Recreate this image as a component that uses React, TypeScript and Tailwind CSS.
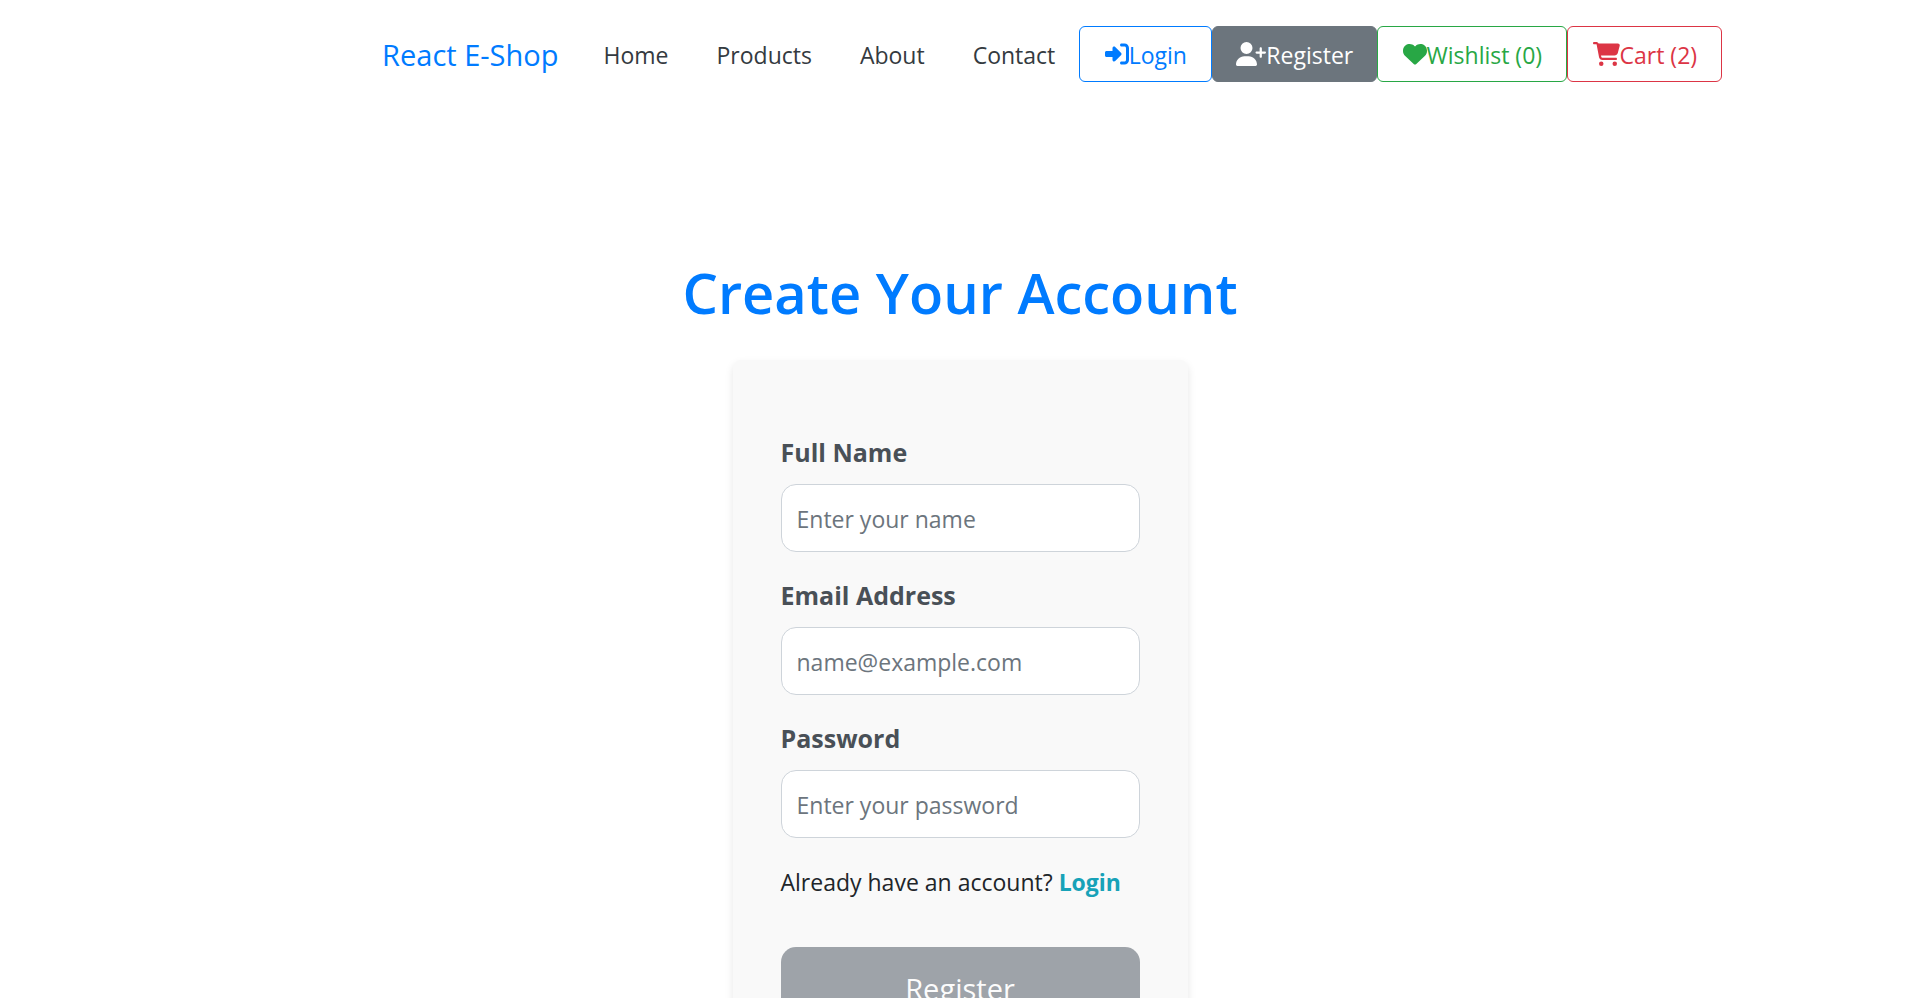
import React from "react";
import { FaCartShopping, FaHeart, FaRightToBracket, FaUserPlus } from "react-icons/fa6";

const links = ["Home", "Products", "About", "Contact"];

const actions = [
  { label: "Login", Icon: FaRightToBracket, size: "w-6", style: "min-w-[133px] border-[#007bff] text-[#007bff]" },
  { label: "Register", Icon: FaUserPlus, size: "w-[30px]", style: "min-w-[165px] border-[#6c757d] bg-[#6c757d] text-white" },
  { label: "Wishlist (0)", Icon: FaHeart, size: "w-6", style: "min-w-[190px] border-[#28a745] text-[#28a745]" },
  { label: "Cart (2)", Icon: FaCartShopping, size: "w-[27px]", style: "min-w-[155px] border-[#dc3545] text-[#dc3545]" },
];

const fields = [
  { id: "name", label: "Full Name", type: "text", placeholder: "Enter your name" },
  { id: "email", label: "Email Address", type: "email", placeholder: "name@example.com" },
  { id: "password", label: "Password", type: "password", placeholder: "Enter your password" },
];

function Navbar() {
  return (
    <nav className="flex h-[108px] items-center pl-[19.9%]">
      <a href="#" className="mr-[21px] pt-0.5 text-[29px] leading-9 whitespace-nowrap text-[#007bff]">
        React E-Shop
      </a>
      <ul className="flex pt-0.5">
        {links.map((link) => (
          <li key={link}>
            <a href="#" className="px-6 text-[#343a40]">
              {link}
            </a>
          </li>
        ))}
      </ul>
      <div className="flex">
        {actions.map(({ label, Icon, size, style }) => (
          <a
            key={label}
            href="#"
            className={`flex h-14 items-center justify-center rounded-md border whitespace-nowrap ${style}`}
          >
            <Icon className={`h-6 shrink-0 ${size}`} />
            <span className="pt-0.5">{label}</span>
          </a>
        ))}
      </div>
    </nav>
  );
}

function RegisterForm() {
  return (
    <form className="w-[455px] rounded-lg bg-[#f9f9f9] px-12 pt-[72px] pb-12 shadow-[0_4px_8px_rgba(0,0,0,0.1)]">
      {fields.map((field) => (
        <div key={field.id} className="mb-[23px]">
          <label htmlFor={field.id} className="mb-3 block text-[25px] leading-10 font-bold text-[#495057]">
            {field.label}
          </label>
          <input
            id={field.id}
            type={field.type}
            placeholder={field.placeholder}
            className="block h-[68px] w-full rounded-[15px] border border-[#ced4da] bg-white px-[15px] pt-0.5 text-[#212529] placeholder:text-[#6c757d]"
          />
        </div>
      ))}
      <p className="my-6 leading-10 whitespace-nowrap text-[#212529]">
        Already have an account?{" "}
        <a href="#" className="font-bold text-[#17a2b8]">
          Login
        </a>
      </p>
      <button
        type="submit"
        disabled
        className="mt-[21px] h-[84px] w-full rounded-[15px] bg-[#9ea3a9] text-[29px] text-[#fcfcfc]"
      >
        Register
      </button>
    </form>
  );
}

export default function App() {
  return (
    <div className="min-h-screen bg-white font-['Open_Sans','Noto_Sans',sans-serif] text-[23px] leading-9">
      <Navbar />
      <main className="flex flex-col items-center px-6 pt-[148px] pb-12">
        <h1 className="mb-8 text-center text-[56px] leading-[72px] font-semibold text-[#007bff]">
          Create Your Account
        </h1>
        <RegisterForm />
      </main>
    </div>
  );
}
